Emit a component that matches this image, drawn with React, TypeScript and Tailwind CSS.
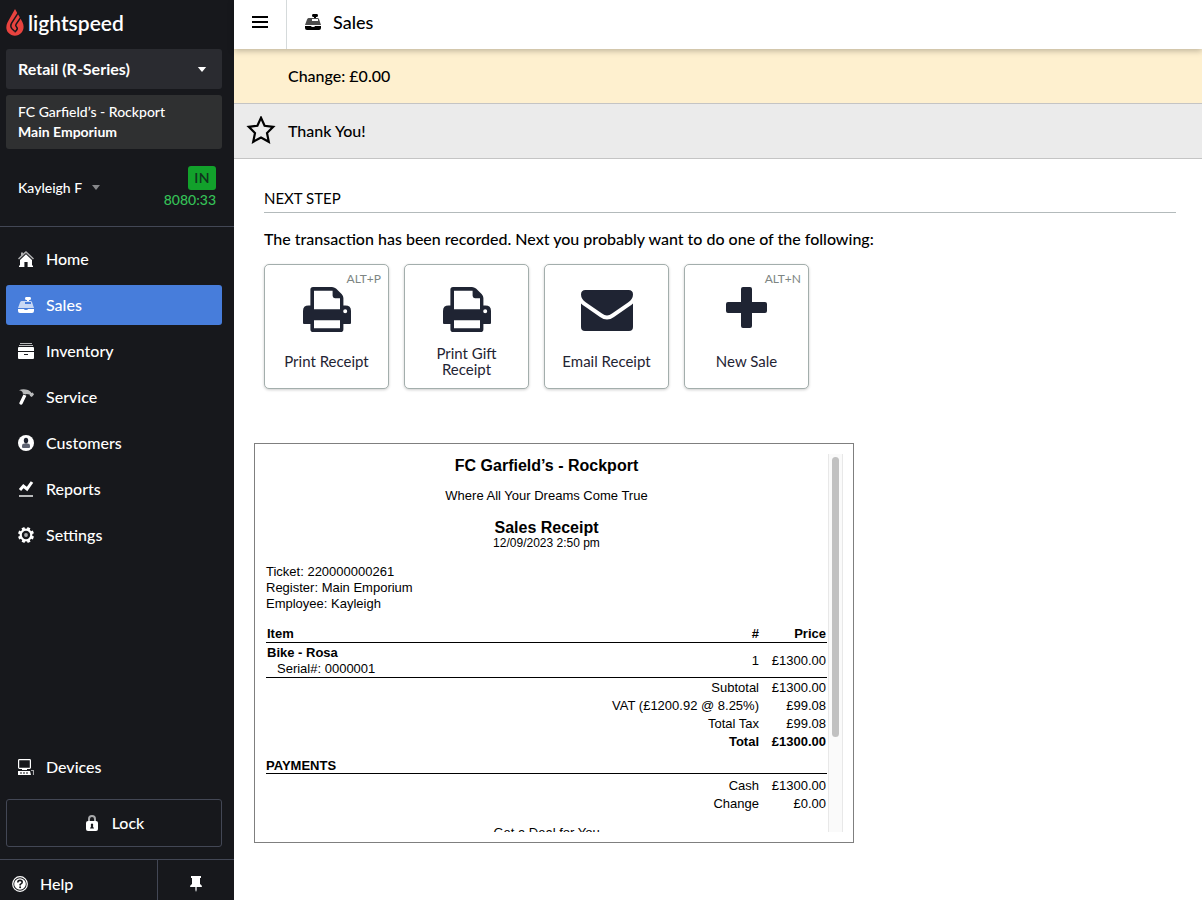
import React from "react";

type IconProps = { className?: string };

const FlameLogo = () => (
  <svg viewBox="0 0 18 27" className="h-[27px] w-[18px]" fill="none" aria-hidden="true">
    <path
      d="M9 0 11.4 4.2 13.8 8.2 16.4 13C18.4 17 17.8 21 15.4 23.8 11.8 27.8 6 27.8 2.4 23.8 0 21 -0.4 17 1.6 13.2Z"
      fill="#e8433f"
    />
    <path d="M12.2 3.8 5.6 14.2C4.2 16.8 4.6 18.4 6.2 20L8.6 22.2" stroke="#17181c" strokeWidth="1.5" />
    <path d="M15 8 10 15.4C9.4 16.4 9.6 17 10.4 17.8 11.8 19.2 11.8 20 10.4 21.4L8.6 23.2" stroke="#17181c" strokeWidth="1.5" />
  </svg>
);

const HomeIcon = ({ className }: IconProps) => (
  <svg viewBox="0 0 16 16" className={className} fill="currentColor" aria-hidden="true">
    <path d="M8 3.2 14 9V14.6H15V16H9.6V11H6.4V16H1V14.6H2V9Z" />
    <path d="M3 3V1.4H5V2.6L8 0 16 7.4 15 8.4 8 2 1 8.4 0 7.4 3 4.6Z" opacity="0.65" />
  </svg>
);

const SalesIcon = ({ className }: IconProps) => (
  <svg viewBox="0 0 16 16" className={className} fill="currentColor" aria-hidden="true">
    <path d="M8 0H12Q13 0 13 1.5 13 3 11.5 3H11V4H9V3H8.5Q7 3 7 1.5 7 0 8 0Z" />
    <path
      fillRule="evenodd"
      d="M3.5 4H12.5Q13.6 4 14 5L16 11H0L2 5.5Q2.5 4 3.5 4ZM7 5V7H13V5Z"
      opacity="0.7"
    />
    <path d="M0 12H6Q6 13 8 13 10 13 10 12H16V14Q16 16 14 16H2Q0 16 0 14Z" />
  </svg>
);

const InventoryIcon = ({ className }: IconProps) => (
  <svg viewBox="0 0 16 16" className={className} fill="currentColor" aria-hidden="true">
    <path d="M2 0H14V1H2ZM1 2H15V3H1Z" opacity="0.7" />
    <path d="M1 4H15Q16 4 16 5V8H0V5Q0 4 1 4Z" />
    <path fillRule="evenodd" d="M0 9H16V15Q16 16 15 16H1Q0 16 0 15ZM6 11V12H10V11Z" />
  </svg>
);

const ServiceIcon = ({ className }: IconProps) => (
  <svg viewBox="0 0 16 16" className={className} fill="currentColor" aria-hidden="true">
    <path d="M1 1.2C3.5 0 7 0 10 1 12 1.8 13 3 13.4 4L14.8 3.4 16 5.4 13.8 8 12 7 11.6 5.6 8.6 5 7.4 5.6 4.6 4.6C5.4 3.4 4 1.8 1 1.2Z" opacity="0.7" />
    <path d="M5.4 5.4 8.4 6.8 4.4 15Q3.8 16.2 2.4 15.6 1 15 1.4 13.8Z" />
  </svg>
);

const CustomersIcon = ({ className }: IconProps) => (
  <svg viewBox="0 0 16 16" className={className} aria-hidden="true">
    <circle cx="8" cy="8" r="8" fill="currentColor" />
    <path d="M4 12V10.5Q4 8.5 6.5 8.5H9.5Q12 8.5 12 10.5V12Q12 13 11 13H5Q4 13 4 12Z" fill="#5d6271" />
    <ellipse cx="8" cy="5.6" rx="2.2" ry="2.8" fill="#1f2330" />
  </svg>
);

const ReportsIcon = ({ className }: IconProps) => (
  <svg viewBox="0 0 16 16" className={className} fill="none" stroke="currentColor" aria-hidden="true">
    <path d="M2 9 5.4 5 9 8 14 1" strokeWidth="3" />
    <path d="M1 15H15" strokeWidth="2" opacity="0.7" />
  </svg>
);

const SettingsIcon = ({ className }: IconProps) => (
  <svg viewBox="0 0 16 16" className={className} aria-hidden="true">
    <g stroke="currentColor" strokeWidth="3">
      <path d="M8 0V3M8 13V16M0 8H3M13 8H16" transform="rotate(22 8 8)" />
      <path d="M8 0V3M8 13V16M0 8H3M13 8H16" transform="rotate(67 8 8)" />
    </g>
    <circle cx="8" cy="8" r="5.3" fill="none" stroke="currentColor" strokeWidth="2.2" />
    <circle cx="8" cy="8" r="1.9" fill="#a8a9ab" />
  </svg>
);

const DevicesIcon = ({ className }: IconProps) => (
  <svg viewBox="0 0 16 16" className={className} aria-hidden="true">
    <rect x="0.6" y="0.6" width="11.8" height="8.8" rx="0.8" fill="none" stroke="currentColor" strokeWidth="1.2" />
    <path d="M4 9H9V11H4ZM1 12H12L13 16H0V12Z" fill="currentColor" />
    <path d="M2 14H4M5 14H7M8 14H10" stroke="#17181c" />
    <path d="M13 11.5H15.5V16" fill="none" stroke="#a8a9ab" strokeWidth="1.2" />
  </svg>
);

const LockIcon = ({ className }: IconProps) => (
  <svg viewBox="0 0 12 16" className={className} aria-hidden="true">
    <path d="M3 7V4Q3 1 6 1 9 1 9 4V7" fill="none" stroke="#a8a9ab" strokeWidth="2" />
    <rect y="6" width="12" height="10" rx="2" fill="currentColor" />
    <path d="M6 8.6A1.4 1.4 0 0 1 6.8 11L8 13.4H4L5.2 11A1.4 1.4 0 0 1 6 8.6Z" fill="#17181c" />
  </svg>
);

const HelpIcon = ({ className }: IconProps) => (
  <svg viewBox="0 0 16 16" className={className} aria-hidden="true">
    <circle cx="8" cy="8" r="7.3" fill="none" stroke="currentColor" strokeWidth="1.2" />
    <circle cx="8" cy="8" r="5.8" fill="currentColor" />
    <path d="M5.8 6.6Q5.8 4.4 8 4.4 10.2 4.4 10.2 6.3 10.2 7.4 8.2 8.4V9.4" fill="none" stroke="#17181c" strokeWidth="1.6" />
    <circle cx="8.1" cy="11.3" r="1" fill="#17181c" />
  </svg>
);

const PinIcon = ({ className }: IconProps) => (
  <svg viewBox="0 0 12 16" className={className} aria-hidden="true">
    <path d="M1 0H11V2H10V8Q12 9 12 11H0Q0 9 2 8V2H1Z" fill="currentColor" />
    <path d="M5 11H7V14L6 16 5 14Z" fill="#a8a9ab" />
  </svg>
);

const PrintIcon = ({ className }: IconProps) => (
  <svg viewBox="0 0 48 45" className={className} fill="currentColor" aria-hidden="true">
    <path
      fillRule="evenodd"
      d="M10 0H29Q31 0 33 1.6L38.6 7Q40.4 9 40.4 11V18.6H42.5Q48 18.6 48 24V36Q48 37 47 37H40.4V42.2Q40.4 45 37.8 45H10Q7.4 45 7.4 42.2V37H1Q0 37 0 36V24Q0 18.6 5.5 18.6H7.4V2.6Q7.4 0 10 0ZM11 3.8V22.2H37V11.2H32Q29.6 11.2 29.6 8.8V3.8ZM11 33.2V41.2H37V33.2ZM42.2 22.2A2 2 0 1 0 42.2 26.2 2 2 0 1 0 42.2 22.2Z"
    />
  </svg>
);

const MailIcon = ({ className }: IconProps) => (
  <svg viewBox="0 0 52 41" className={className} fill="currentColor" aria-hidden="true">
    <path d="M4.5 0H47.5Q52 0 52 4.5 52 9 47 12.4L31 23.6Q26 27.4 21 23.6L5 12.4Q0 9 0 4.5 0 0 4.5 0Z" />
    <path d="M0 13.4Q1.6 15 3.6 16.2L19 27Q26 32 33 27L48.4 16.2Q50.4 15 52 13.4V37Q52 41 48 41H4Q0 41 0 37Z" />
  </svg>
);

const PlusIcon = ({ className }: IconProps) => (
  <svg viewBox="0 0 41 41" className={className} fill="currentColor" aria-hidden="true">
    <path d="M17 0H24Q26 0 26 2V15H39Q41 15 41 17V24Q41 26 39 26H26V39Q26 41 24 41H17Q15 41 15 39V26H2Q0 26 0 24V17Q0 15 2 15H15V2Q15 0 17 0Z" />
  </svg>
);

const navItems = [
  { label: "Home", Icon: HomeIcon },
  { label: "Sales", Icon: SalesIcon, active: true },
  { label: "Inventory", Icon: InventoryIcon },
  { label: "Service", Icon: ServiceIcon },
  { label: "Customers", Icon: CustomersIcon },
  { label: "Reports", Icon: ReportsIcon },
  { label: "Settings", Icon: SettingsIcon },
];

const actions = [
  { label: "Print Receipt", Icon: PrintIcon, size: "h-[45px] w-12", shortcut: "ALT+P" },
  { label: "Print Gift Receipt", Icon: PrintIcon, size: "h-[45px] w-12" },
  { label: "Email Receipt", Icon: MailIcon, size: "mt-[2px] h-[41px] w-[52px]" },
  { label: "New Sale", Icon: PlusIcon, size: "mb-1 h-[41px] w-[41px]", shortcut: "ALT+N" },
];

const totals = [
  { label: "Subtotal", value: "£1300.00" },
  { label: "VAT (£1200.92 @ 8.25%)", value: "£99.08" },
  { label: "Total Tax", value: "£99.08" },
  { label: "Total", value: "£1300.00", bold: true },
];

const payments = [
  { label: "Cash", value: "£1300.00" },
  { label: "Change", value: "£0.00" },
];

const Sidebar = () => (
  <aside className="flex w-[234px] shrink-0 flex-col bg-[#17181c] font-medium text-white">
    <a href="#" className="flex h-[49px] items-center gap-1 pb-1 pl-[6px]">
      <FlameLogo />
      <span className="font-['Lato'] text-[21px] leading-6 font-semibold">lightspeed</span>
    </a>

    <div className="flex flex-col gap-[6px] pr-3 pl-[6px]">
      <button className="flex h-10 items-center justify-between rounded-[3px] bg-[#2a2b30] px-3 text-base font-bold">
        Retail (R-Series)
        <svg viewBox="0 0 10 6" className="mr-[3px] h-[5px] w-[10px]" fill="currentColor" aria-hidden="true">
          <path d="M0 0H10L5 6Z" />
        </svg>
      </button>
      <div className="flex h-[54px] flex-col justify-center rounded-[3px] bg-[#2f3031] px-3 text-sm leading-5">
        <span>FC Garfield’s - Rockport</span>
        <span className="font-bold">Main Emporium</span>
      </div>
    </div>

    <div className="flex h-[78px] items-center justify-between border-b border-[#434755] pr-[18px] pl-[18px]">
      <button className="flex items-center gap-[10px] text-sm">
        Kayleigh F
        <svg viewBox="0 0 8 5" className="h-[5px] w-2" fill="#87888b" aria-hidden="true">
          <path d="M0 0H8L4 5Z" />
        </svg>
      </button>
      <div className="flex flex-col items-end pt-px">
        <button className="h-6 w-7 rounded-[3px] bg-[#12a12b] text-sm leading-6 font-semibold tracking-wide text-[#10331e]">IN</button>
        <span className="text-sm leading-5 text-[#35c157]">8080:33</span>
      </div>
    </div>

    <nav className="flex flex-1 flex-col gap-[6px] py-3 pr-3 pl-[6px]">
      {navItems.map(({ label, Icon, active }) => (
        <a
          key={label}
          href="#"
          className={`flex h-10 items-center gap-3 rounded-[3px] px-3 text-base ${active ? "bg-[#477ddb]" : ""}`}
        >
          <Icon className="h-4 w-4" />
          {label}
        </a>
      ))}
      <a href="#" className="mt-auto flex h-10 items-center gap-3 px-3 text-base">
        <DevicesIcon className="h-4 w-4" />
        Devices
      </a>
    </nav>

    <div className="pr-3 pb-3 pl-[6px]">
      <button className="flex h-12 w-full items-center justify-center gap-[14px] rounded-[3px] border border-[#434755] pl-[2px] text-base">
        <LockIcon className="h-4 w-3" />
        Lock
      </button>
    </div>

    <div className="flex h-[41px] border-t border-[#434755]">
      <a href="#" className="flex flex-1 items-center gap-3 pt-2 pl-3 text-base">
        <HelpIcon className="h-4 w-4" />
        Help
      </a>
      <button
        aria-label="Pin menu"
        className="flex w-[77px] items-center justify-center border-l border-[#434755] pt-2"
      >
        <PinIcon className="h-4 w-3" />
      </button>
    </div>
  </aside>
);

const Receipt = () => (
  <section className="mt-[54px] ml-5 flex h-[400px] w-full max-w-[600px] border border-[#7f7f7f] p-[10px] font-['Liberation_Sans',sans-serif] text-[13px] leading-4">
    <div className="flex-1 overflow-hidden px-px">
      <header className="text-center">
        <h2 className="pt-[2px] text-base leading-5 font-bold">FC Garfield’s - Rockport</h2>
        <p className="pt-3">Where All Your Dreams Come True</p>
        <h3 className="pt-[15px] text-base leading-[18px] font-bold">Sales Receipt</h3>
        <p className="text-xs leading-3">12/09/2023 2:50 pm</p>
      </header>

      <div className="pt-[15px]">
        <p>Ticket: 220000000261</p>
        <p>Register: Main Emporium</p>
        <p>Employee: Kayleigh</p>
      </div>

      <table className="mt-[14px] w-full border-collapse">
        <thead>
          <tr className="border-b border-black">
            <th className="px-px text-left">Item</th>
            <th className="w-[60px] px-px text-right">#</th>
            <th className="w-[67px] px-px text-right">Price</th>
          </tr>
        </thead>
        <tbody>
          <tr className="border-b border-black">
            <td className="px-px pt-[2px]">
              <p className="font-bold">Bike - Rosa</p>
              <p className="pl-[10px]">Serial#: 0000001</p>
            </td>
            <td className="px-px pt-[2px] text-right">1</td>
            <td className="px-px pt-[2px] text-right">£1300.00</td>
          </tr>
        </tbody>
      </table>

      <table className="mt-px w-full border-collapse text-right">
        <tbody>
          {totals.map((row) => (
            <tr key={row.label} className={row.bold ? "font-bold" : ""}>
              <td className="p-px">{row.label}</td>
              <td className="w-[67px] p-px">{row.value}</td>
            </tr>
          ))}
        </tbody>
      </table>

      <h4 className="mt-[7px] border-b border-black leading-[15px] font-bold">PAYMENTS</h4>
      <table className="mt-[3px] w-full border-collapse text-right">
        <tbody>
          {payments.map((row) => (
            <tr key={row.label}>
              <td className="p-px">{row.label}</td>
              <td className="w-[67px] p-px">{row.value}</td>
            </tr>
          ))}
        </tbody>
      </table>

      <p className="mt-3 text-center">Get a Deal for You</p>
    </div>

    {/* scroll bar */}
    <div className="w-[15px] border-x border-[#e8e8e8] bg-[#fafafa] px-[3px] pt-[3px]">
      <div className="h-[280px] rounded-full bg-[#c1c1c1]" />
    </div>
  </section>
);

const App = () => (
  <div className="flex min-h-screen bg-white font-['Lato',sans-serif] text-black">
    <Sidebar />

    <div className="min-w-0 flex-1 font-medium">
      <header className="relative flex h-[49px] items-center bg-white shadow-[0_2px_6px_rgba(0,0,0,0.25)]">
        <button
          aria-label="Toggle menu"
          className="flex h-full w-[53px] items-center justify-center border-r border-[#d5dadb] pb-[6px]"
        >
          <svg viewBox="0 0 16 12" className="h-3 w-4" fill="currentColor" aria-hidden="true">
            <path d="M0 0H16V2H0ZM0 5H16V7H0ZM0 10H16V12H0Z" />
          </svg>
        </button>
        <h1 className="flex items-center gap-3 pb-[6px] pl-[18px] text-lg font-medium">
          <SalesIcon className="h-4 w-4" />
          Sales
        </h1>
      </header>

      <div className="flex h-[55px] items-center border-b border-[#c4c4c4] bg-[#fef0cf] pl-[54px] text-base">
        Change: £0.00
      </div>
      <div className="flex h-[55px] items-center gap-3 border-b border-[#c4c4c4] bg-[#ebebeb] pl-3 text-base">
        <svg viewBox="0 0 30 30" className="h-[30px] w-[30px]" fill="none" stroke="currentColor" strokeWidth="2.2" aria-hidden="true">
          <path d="M15 1.8 18.6 9.8 27.2 10.8 21 17 22.8 25.8 15 21.6 7.2 25.8 9 17 2.8 10.8 11.4 9.8Z" />
        </svg>
        Thank You!
      </div>

      <main className="pt-7 pr-[26px]">
        <div className="pl-[30px]">
          <h2 className="border-b border-[#b3babb] pb-[3px] text-[15px] leading-[22px] font-normal">NEXT STEP</h2>
          <p className="pt-[14px] text-base leading-6">
            The transaction has been recorded. Next you probably want to do one of the following:
          </p>
          <div className="mt-[13px] flex flex-wrap gap-[15px]">
            {actions.map(({ label, Icon, size, shortcut }) => (
              <button
                key={label}
                className="relative flex h-[125px] w-[125px] flex-col items-center rounded-[5px] border border-[#a3aeac] bg-white px-3 pt-4 text-[15px] leading-4 font-normal text-[#1f2433] shadow-[0_1px_3px_rgba(0,0,0,0.2)]"
              >
                {shortcut && (
                  <span className="absolute top-[6px] right-[7px] text-xs text-[#7d8583]">{shortcut}</span>
                )}
                <span className="flex h-[57px] items-center">
                  <Icon className={size} />
                </span>
                <span className="flex h-[46px] items-center">{label}</span>
              </button>
            ))}
          </div>
        </div>

        <Receipt />
      </main>
    </div>
  </div>
);

export default App;
